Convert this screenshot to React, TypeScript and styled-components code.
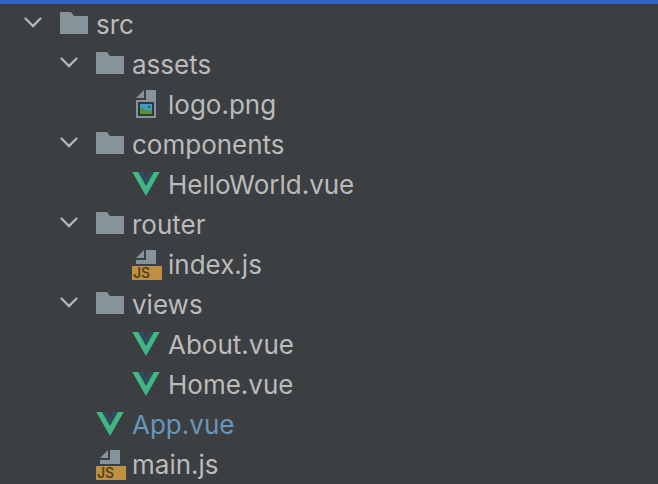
import React, { useState } from "react";
import styled, { createGlobalStyle } from "styled-components";

const GlobalStyle = createGlobalStyle`
  *, *::before, *::after { box-sizing: border-box; }
  body {
    margin: 0;
    background: #3c3f41;
    font-family: Inter, "Liberation Sans", sans-serif;
  }
`;

const Panel = styled.nav`
  min-height: 100vh;
  border-top: 4px solid #2f65ca;
  background: #3c3f41;
  overflow: hidden;
`;

const List = styled.ul`
  list-style: none;
  margin: 0;
  padding: 0;
`;

const Row = styled.div<{ $depth: number; $leaf: boolean }>`
  display: flex;
  align-items: center;
  gap: 4px;
  height: 40px;
  padding-left: ${(p) => 22 + (p.$leaf ? p.$depth + 1 : p.$depth) * 36}px;
`;

const Toggle = styled.button<{ $open: boolean }>`
  width: 32px;
  height: 32px;
  padding: 0;
  border: 0;
  background: none;
  cursor: pointer;

  svg {
    display: block;
    transform: ${(p) => (p.$open ? "none" : "rotate(-90deg)")};
  }
`;

const Icon = styled.svg`
  flex: none;
  width: 32px;
  height: 32px;
  overflow: visible;
`;

const Name = styled.span<{ $modified: boolean }>`
  padding: 2px 0 0 2px;
  font-size: 26px;
  line-height: 40px;
  white-space: nowrap;
  color: ${(p) => (p.$modified ? "#6897bb" : "#bbbbbb")};
`;

const Badge = styled.text`
  font: 600 14px Inter, "Liberation Sans", sans-serif;
  fill: #54431f;
`;

const Chevron = () => (
  <Icon viewBox="0 0 32 32" aria-hidden="true">
    <path d="M3.500 10.500 11 18l7.500-7.500" fill="none" stroke="#b4b6b8" strokeWidth="2.300" strokeLinecap="round" />
  </Icon>
);

const FolderIcon = () => (
  <Icon viewBox="0 0 32 32" aria-hidden="true">
    <path d="M2 4h9.500c1 0 1.700.3 2.300 1L16 8h14v18H2z" fill="#87939a" />
  </Icon>
);

const VueIcon = () => (
  <Icon viewBox="0 0 32 32" aria-hidden="true">
    <path d="M2.300 4H9l7 12 7-12h6.700L16 28z" fill="#41b883" />
    <path d="M8 4h5.500L16 8.500 18.500 4H24l-8 14z" fill="#35495e" />
  </Icon>
);

const ImageIcon = () => (
  <Icon viewBox="0 0 32 32" aria-hidden="true">
    <path d="M6 10l8-8v8z" fill="#87939a" />
    <path d="M16 2h10v28H6V12h10z" fill="#87939a" />
    <path d="M8 14h16v14H8z" fill="#343739" />
    <path d="M10 16h12v10H10z" fill="#3c9dc2" />
    <path d="M10 21c2-1.800 3-1.800 5 .3s4 1.700 7 .7V26H10z" fill="#549137" />
    <circle cx="19" cy="19" r="1" fill="#343739" />
  </Icon>
);

const ScriptIcon = () => (
  <Icon viewBox="0 0 32 32" aria-hidden="true">
    <path d="M6 10l8-8v8z" fill="#87939a" />
    <path d="M16 2h10v14H6v-4h10z" fill="#87939a" />
    <path d="M2 18h30v14H2z" fill="#be9040" />
    <Badge x="3" y="30">JS</Badge>
  </Icon>
);

type Kind = "folder" | "vue" | "image" | "script";

interface Entry {
  name: string;
  kind: Kind;
  modified?: boolean;
  children?: Entry[];
}

const icons: Record<Kind, () => React.JSX.Element> = {
  folder: FolderIcon,
  vue: VueIcon,
  image: ImageIcon,
  script: ScriptIcon,
};

const root: Entry = {
  name: "src",
  kind: "folder",
  children: [
    { name: "assets", kind: "folder", children: [{ name: "logo.png", kind: "image" }] },
    { name: "components", kind: "folder", children: [{ name: "HelloWorld.vue", kind: "vue" }] },
    { name: "router", kind: "folder", children: [{ name: "index.js", kind: "script" }] },
    {
      name: "views",
      kind: "folder",
      children: [
        { name: "About.vue", kind: "vue" },
        { name: "Home.vue", kind: "vue" },
      ],
    },
    { name: "App.vue", kind: "vue", modified: true },
    { name: "main.js", kind: "script" },
  ],
};

function TreeNode({ entry, depth }: { entry: Entry; depth: number }) {
  const [open, setOpen] = useState(true);
  const EntryIcon = icons[entry.kind];
  const leaf = !entry.children;
  return (
    <li>
      <Row $depth={depth} $leaf={leaf}>
        {!leaf && (
          <Toggle $open={open} aria-expanded={open} aria-label={entry.name} onClick={() => setOpen(!open)}>
            <Chevron />
          </Toggle>
        )}
        <EntryIcon />
        <Name $modified={!!entry.modified}>{entry.name}</Name>
      </Row>
      {entry.children && open && (
        <List>
          {entry.children.map((child) => (
            <TreeNode key={child.name} entry={child} depth={depth + 1} />
          ))}
        </List>
      )}
    </li>
  );
}

export default function App() {
  return (
    <>
      <GlobalStyle />
      <Panel aria-label="Project files">
        <List>
          <TreeNode entry={root} depth={0} />
        </List>
      </Panel>
    </>
  );
}
